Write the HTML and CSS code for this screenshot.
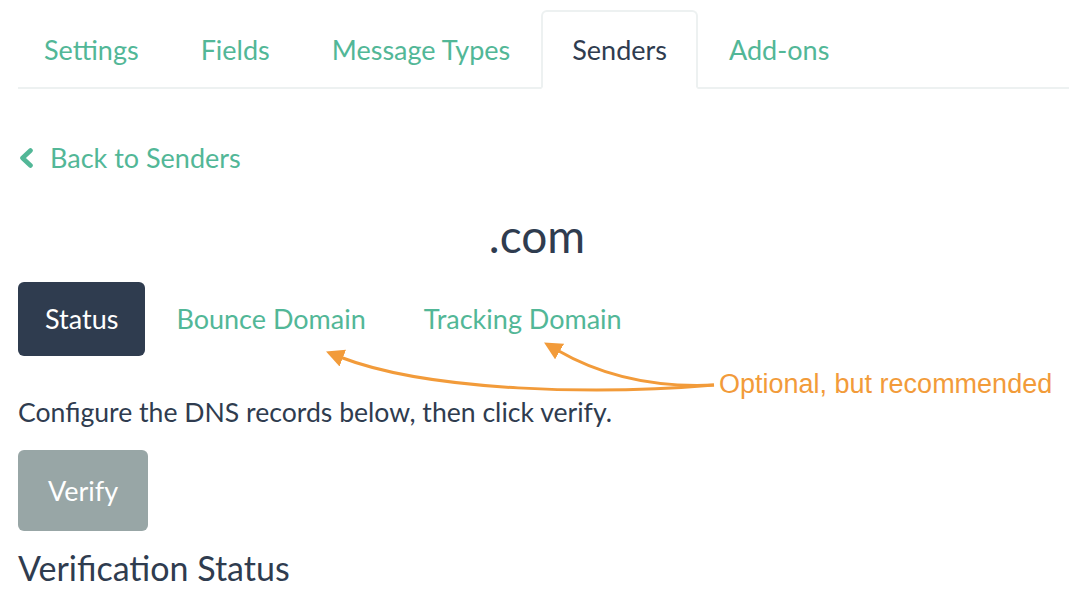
FILE: index.html
```html
<!DOCTYPE html>
<html lang="en">
<head>
  <meta charset="UTF-8">
  <meta name="viewport" content="width=device-width, initial-scale=1.0">
  <title>Senders - Domain</title>
  <link rel="stylesheet" href="styles.css">
</head>
<body>
  <div class="page">
    <nav class="tabs">
      <a class="tab" href="#">Settings</a>
      <a class="tab" href="#">Fields</a>
      <a class="tab" href="#">Message Types</a>
      <a class="tab active" href="#">Senders</a>
      <a class="tab" href="#">Add-ons</a>
    </nav>

    <a class="back" href="#">
      <svg class="back-icon" width="16" height="20" viewBox="0 0 16 20">
        <polyline points="12.5,2.5 4.5,10 12.5,17.5" fill="none" stroke="currentColor" stroke-width="4.6" stroke-linecap="round" stroke-linejoin="round"/>
      </svg>
      Back to Senders
    </a>

    <h1 class="domain">.com</h1>

    <div class="pills">
      <a class="pill active" href="#">Status</a>
      <a class="pill" href="#">Bounce Domain</a>
      <a class="pill" href="#">Tracking Domain</a>
    </div>

    <p class="hint">Configure the DNS records below, then click verify.</p>

    <button class="verify" type="button">Verify</button>

    <h2 class="section-title">Verification Status</h2>
  </div>

  <!-- annotation drawn over the screenshot -->
  <svg class="arrows" width="1069" height="611" viewBox="0 0 1069 611">
    <defs>
      <marker id="head" markerWidth="6" markerHeight="6" refX="1" refY="3" orient="auto-start-reverse" markerUnits="strokeWidth">
        <path d="M0,0 L6,3 L0,6 Z" fill="#f29b3a"/>
      </marker>
    </defs>
    <path d="M714,385 C600,395 430,392 340,357" fill="none" stroke="#f29b3a" stroke-width="3" marker-end="url(#head)"/>
    <path d="M714,385 C650,388 600,375 557,350" fill="none" stroke="#f29b3a" stroke-width="3" marker-end="url(#head)"/>
  </svg>
  <div class="note">Optional, but recommended</div>
</body>
</html>
```

FILE: styles.css
```css
body {
  margin: 0;
  font-family: Lato, "Open Sans", sans-serif;
  color: #2f3c4f;
  background: #fff;
}
a {
  color: #52b797;
  text-decoration: none;
}
.page {
  padding-left: 18px;
}
.tabs {
  display: flex;
  padding-top: 10px;
  border-bottom: 2px solid #edf1f1;
}
.tab {
  font-size: 27px;
  line-height: 27px;
  padding: 24px 29px;
  border: 2px solid transparent;
  border-radius: 6px 6px 0 0;
  margin-bottom: -2px;
}
.tab:first-child {
  margin-left: -5px;
}
.tab.active {
  color: #2f3c4f;
  background: #fff;
  border-color: #edf1f1;
  border-bottom-color: #fff;
}
.back {
  display: flex;
  align-items: center;
  margin-top: 54px;
  font-size: 27px;
  line-height: 30px;
}
.back-icon {
  margin-right: 16px;
}
.domain {
  margin: 36px 0 0;
  padding-right: 13px;
  text-align: center;
  font-size: 46px;
  font-weight: 400;
  line-height: 54px;
}
.pills {
  display: flex;
  gap: 4px;
  margin-top: 19px;
}
.pill {
  font-size: 27px;
  line-height: 30px;
  padding: 22px 27px;
  border-radius: 6px;
}
.pill.active {
  color: #fff;
  background: #2f3c4f;
}
.hint {
  margin: 41px 0 0;
  font-size: 26.6px;
  line-height: 30px;
}
.verify {
  display: block;
  margin-top: 23px;
  padding: 0 30px;
  height: 81px;
  border: 0;
  border-radius: 6px;
  background: #98a6a6;
  color: #fff;
  font-family: inherit;
  font-size: 27px;
}
.section-title {
  margin: 17px 0 0;
  font-size: 34px;
  font-weight: 400;
  line-height: 40px;
}
.arrows {
  position: absolute;
  top: 0;
  left: 0;
  pointer-events: none;
}
.note {
  position: absolute;
  top: 370px;
  left: 719px;
  font-family: "Liberation Sans", Arial, sans-serif;
  font-size: 27px;
  line-height: 28px;
  color: #f29b3a;
}
```
